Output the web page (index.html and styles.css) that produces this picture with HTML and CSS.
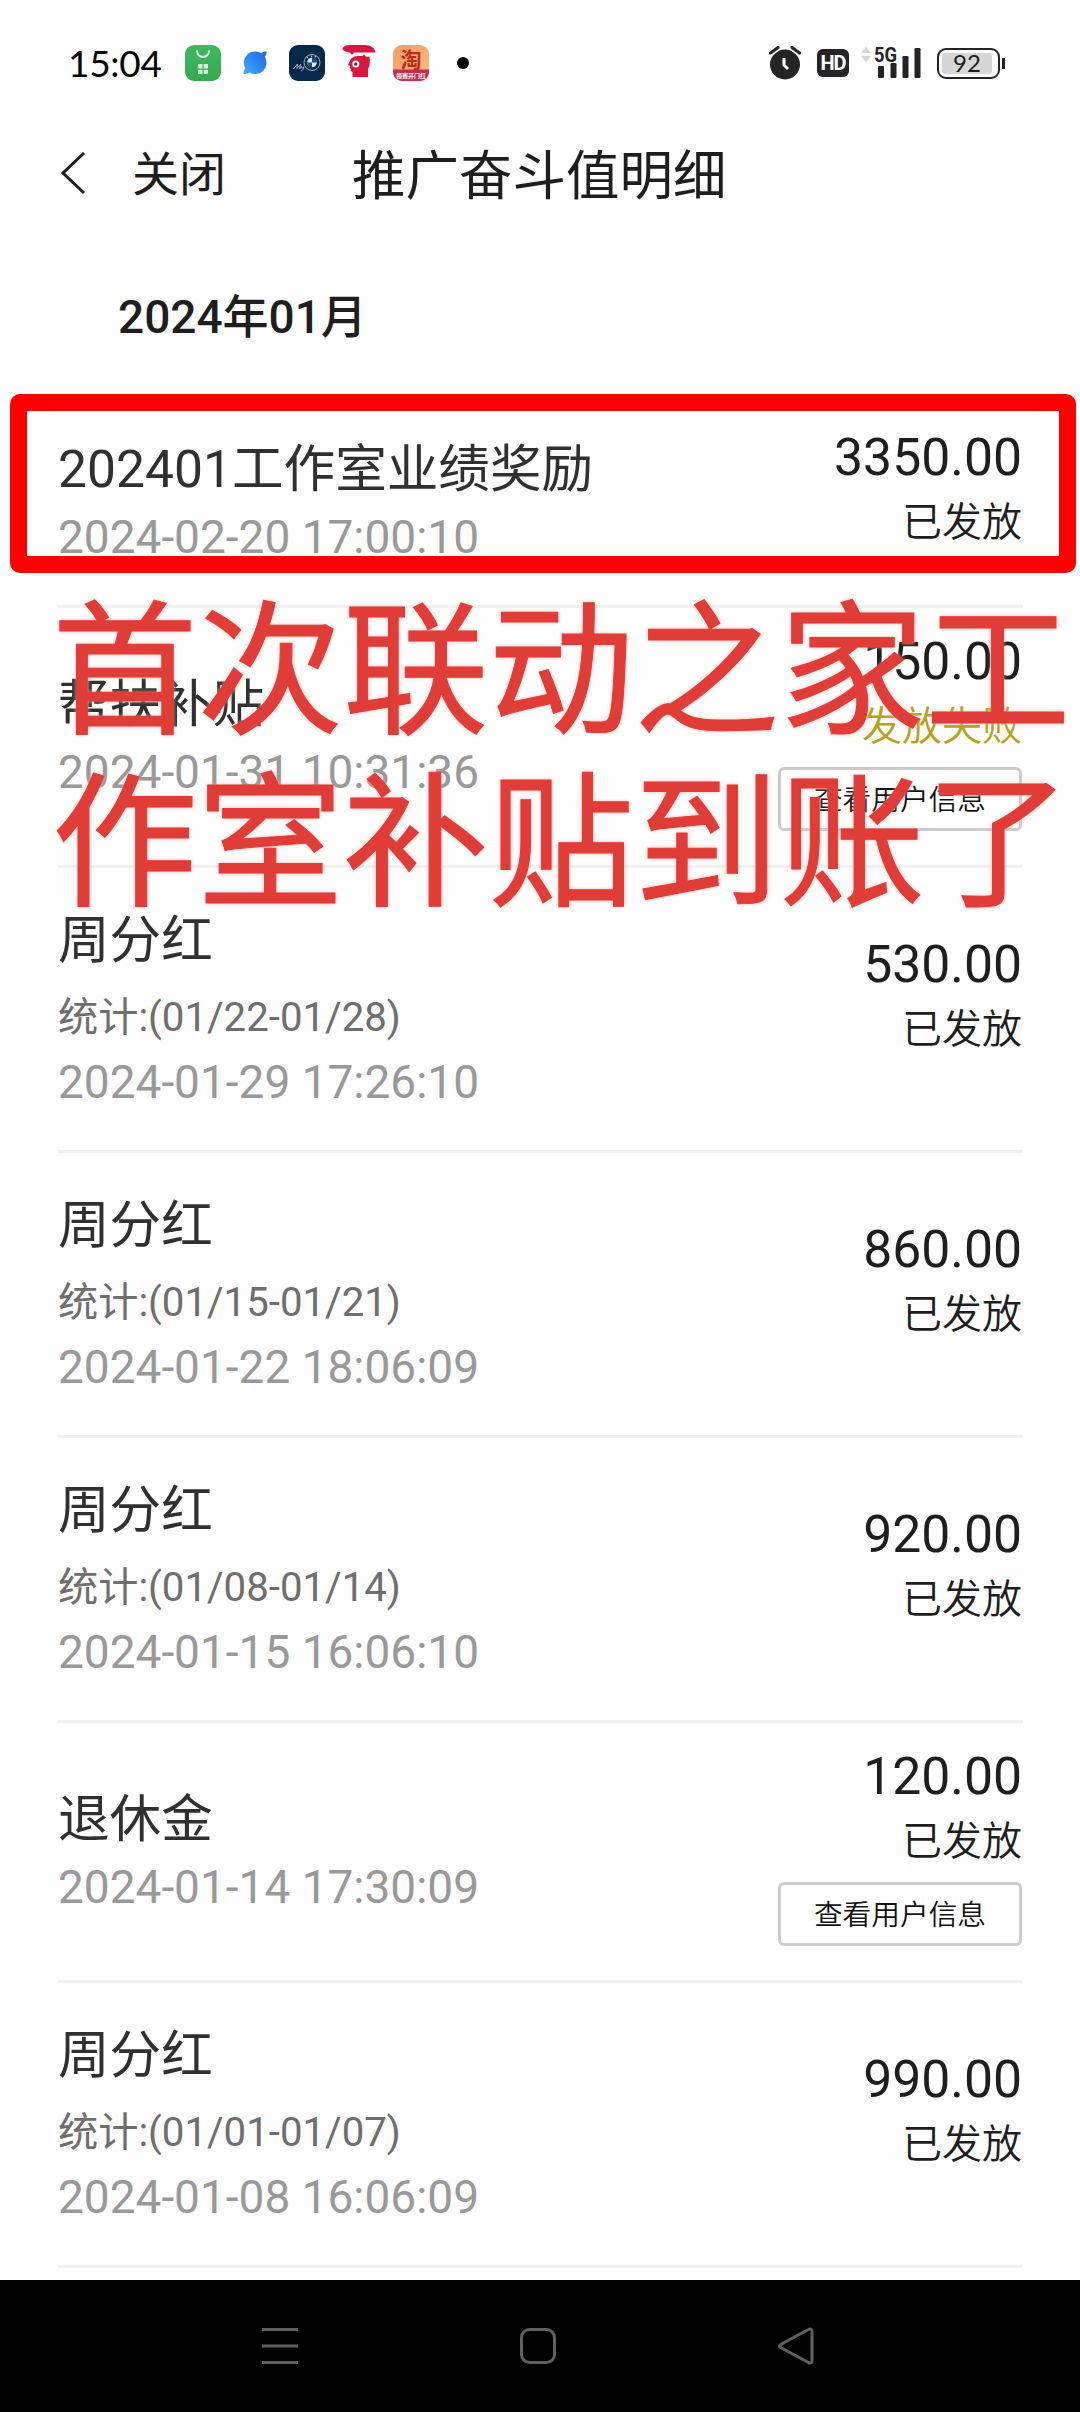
FILE: index.html
```html
<!DOCTYPE html>
<html lang="zh-CN">
<head>
<meta charset="utf-8">
<title>推广奋斗值明细</title>
<link rel="stylesheet" href="styles.css">
</head>
<body>
<div class="screen">
  <header class="status-bar">
    <span class="clock">15:04</span>
    <div class="apps">
      <svg class="app" viewBox="0 0 36 36"><defs><linearGradient id="g1" x2="0" y2="1"><stop offset="0" stop-color="#3fba62"/><stop offset="1" stop-color="#35a950"/></linearGradient></defs><rect width="36" height="36" rx="9" fill="url(#g1)"/><path d="M12 6a6 6 0 0 0 12 0" fill="none" stroke="#e4f8e8" stroke-width="1.8" stroke-linecap="round"/><path d="M13 19h4.500v4.500H14a1 1 0 0 1-1-1zM18.700 19h4.300v3.500a1 1 0 0 1-1 1h-3.300zM13 24.700h4.500V29H14a1 1 0 0 1-1-1zM18.700 24.700H22a1 1 0 0 1 1 1V28a1 1 0 0 1-1 1h-3.300z" fill="#d6f5dc"/></svg>
      <svg class="app" viewBox="0 0 36 36"><defs><linearGradient id="g2" x1="0" y1="1" x2="1" y2="0"><stop offset="0" stop-color="#3fb0ee"/><stop offset=".5" stop-color="#2f86f5"/><stop offset="1" stop-color="#2a62e0"/></linearGradient></defs><circle cx="18.200" cy="17.800" r="11.300" fill="url(#g2)"/><path d="M24 8c1.500-.8 4.800-2.200 5.500-1.300.8 1-1 4-2 5.600zM12.500 27.500c-1.500.9-5 1.900-5.700 1.200-.8-1 .5-4.200 1.500-5.700z" fill="url(#g2)"/></svg>
      <svg class="app" viewBox="0 0 36 36"><rect width="36" height="36" rx="9" fill="#06294a"/><circle cx="23" cy="17.500" r="8" fill="none" stroke="#9fb4c8" stroke-width="1"/><circle cx="23" cy="17.500" r="4.800" fill="#dce8f2"/><path d="M23 12.700a4.800 4.800 0 0 1 4.800 4.800H23zM23 22.300a4.800 4.800 0 0 1-4.800-4.800H23z" fill="#164d80"/><path d="M17.500 12l2 1M22 10.500l1 1.500M26.500 11l-.5 1.500" stroke="#fff" stroke-width=".9"/><path d="M4.500 24l4-5-.6 4.500 3.600-4-1 4c1 .5 1.500-1 2-2 0 2 1 2 2.500.3-.6 2.500-1.600 4-3 4.200" fill="none" stroke="#c8d6e4" stroke-width=".8"/></svg>
      <svg class="app" viewBox="0 0 36 36"><g fill="#d81540"><path d="M1.500 4C1.500 1.500 5 0 10 0h14c6 0 10 3.500 10.500 7.500H13L11 9.800 8.800 7.500C5 7 2 6 1.500 4z"/><path d="M9.500 14.500C11 12 14 11 17 11h4l2-1.500 2 2.200h3.500c.5 4 .8 8-1.500 12.300v8H11.500v-5l-2-1 .3-2-1.300-1.500 1-1.500L7 20z"/></g><circle cx="14.800" cy="19" r="3.500" fill="#fff"/><circle cx="14.800" cy="19" r="1.600" fill="#3b1a30"/></svg>
      <svg class="app" viewBox="0 0 36 36"><defs><clipPath id="c1"><rect width="36" height="36" rx="9"/></clipPath><linearGradient id="g3" x2="1" y2="1"><stop offset="0" stop-color="#f29a64"/><stop offset="1" stop-color="#fbbf83"/></linearGradient></defs><g clip-path="url(#c1)"><rect width="36" height="36" fill="url(#g3)"/><rect y="24.500" width="36" height="12" fill="#c92a4f"/></g><text class="tao" x="18" y="21.500" text-anchor="middle">淘</text><text class="tao-tag" x="18" y="33" text-anchor="middle">领赛开门红</text></svg>
      <span class="dot"></span>
    </div>
    <div class="system">
      <svg class="alarm" viewBox="0 0 32 34"><circle cx="16" cy="18.500" r="15" fill="#242426"/><path d="M1.500 7L9 1.500M30.500 7L23 1.500" stroke="#fdfdfd" stroke-width="6"/><path d="M1.500 7L9 1.500M30.500 7L23 1.500" stroke="#242426" stroke-width="3.200" stroke-linecap="round"/><path d="M15 12v7l4 4" fill="none" stroke="#fff" stroke-width="3"/></svg>
      <span class="hd">HD</span>
      <svg class="signal" viewBox="0 0 60 34"><path d="M0 7l5-6 5 6zM0 10l5 6 5-6z" fill="#d6d6d6"/><text class="net" x="13" y="16" textLength="23" lengthAdjust="spacingAndGlyphs">5G</text><g fill="#242426"><rect x="17" y="20" width="6" height="12" rx="1.200"/><rect x="29.500" y="17" width="6" height="15" rx="1.200"/><rect x="41.500" y="10" width="6" height="22" rx="1.200"/><rect x="53.500" y="2" width="6" height="30" rx="1.200"/></g></svg>
      <div class="battery"><span class="level">92</span></div>
    </div>
  </header>

  <nav class="title-bar">
    <svg class="back" viewBox="0 0 26 44"><path d="M24 2L3 22l21 20" fill="none" stroke="#1e1e1e" stroke-width="3"/></svg>
    <span class="close">关闭</span>
    <h1 class="title">推广奋斗值明细</h1>
  </nav>

  <h2 class="month">2024年01月</h2>

  <main class="list">
    <section class="row row-first">
      <div class="info"><p class="name">202401工作室业绩奖励</p><p class="date">2024-02-20 17:00:10</p></div>
      <div class="result"><p class="amount">3350.00</p><p class="state">已发放</p></div>
    </section>
    <section class="row row-action">
      <div class="info"><p class="name">帮扶补贴</p><p class="date">2024-01-31 10:31:36</p></div>
      <div class="result"><p class="amount">150.00</p><p class="state failed">发放失败</p><button class="view">查看用户信息</button></div>
    </section>
    <section class="row">
      <div class="info"><p class="name">周分红</p><p class="period">统计:(01/22-01/28)</p><p class="date">2024-01-29 17:26:10</p></div>
      <div class="result"><p class="amount">530.00</p><p class="state">已发放</p></div>
    </section>
    <section class="row">
      <div class="info"><p class="name">周分红</p><p class="period">统计:(01/15-01/21)</p><p class="date">2024-01-22 18:06:09</p></div>
      <div class="result"><p class="amount">860.00</p><p class="state">已发放</p></div>
    </section>
    <section class="row">
      <div class="info"><p class="name">周分红</p><p class="period">统计:(01/08-01/14)</p><p class="date">2024-01-15 16:06:10</p></div>
      <div class="result"><p class="amount">920.00</p><p class="state">已发放</p></div>
    </section>
    <section class="row row-action">
      <div class="info"><p class="name">退休金</p><p class="date">2024-01-14 17:30:09</p></div>
      <div class="result"><p class="amount">120.00</p><p class="state">已发放</p><button class="view">查看用户信息</button></div>
    </section>
    <section class="row">
      <div class="info"><p class="name">周分红</p><p class="period">统计:(01/01-01/07)</p><p class="date">2024-01-08 16:06:09</p></div>
      <div class="result"><p class="amount">990.00</p><p class="state">已发放</p></div>
    </section>
  </main>

  <footer class="nav-keys">
    <svg viewBox="0 0 40 40"><path d="M2 3.500h36M2 20h36M2 36.500h36"/></svg>
    <svg viewBox="0 0 40 40"><rect x="3.500" y="3.500" width="33" height="33" rx="8"/></svg>
    <svg viewBox="0 0 40 40"><path d="M32.500 3.500L5 18.200q-3 1.800 0 3.600l27.500 14.700q3.500 1.500 3.500-2v-29q0-3.500-3.500-2z"/></svg>
  </footer>

  <div class="mark-box"></div>
  <p class="mark-text">首次联动之家工<br>作室补贴到账了</p>
</div>
</body>
</html>
```
FILE: styles.css
```css
* { box-sizing: border-box; margin: 0; padding: 0; }
body {
  background: #fdfdfd;
  color: #1e1e1e;
  font-family: Roboto, "Noto Sans CJK SC", sans-serif;
}
.screen {
  position: relative;
  display: flex;
  flex-direction: column;
  width: 1080px;
  height: 2412px;
  overflow: hidden;
}

/* system status */
.status-bar {
  display: flex;
  align-items: center;
  height: 126px;
  padding: 0 75px 0 68px;
}
.clock {
  width: 117px;
  font: 37px/40px Lato, sans-serif;
  letter-spacing: -.3px;
  color: #000;
}
.apps { display: flex; align-items: center; gap: 16px; }
.app { width: 36px; height: 36px; overflow: visible; }
.dot { width: 12px; height: 12px; margin-left: 12px; border-radius: 50%; background: #000; }
.tao { font: 700 21px "Noto Sans CJK SC", sans-serif; fill: #c4281c; }
.tao-tag { font: 700 6px "Noto Sans CJK SC", sans-serif; fill: #fff; }
.system { display: flex; align-items: center; margin-left: auto; }
.alarm { width: 32px; height: 34px; }
.hd {
  width: 32px;
  height: 28px;
  margin-left: 16px;
  border-radius: 6px;
  background: #242426;
  color: #fff;
  font: 700 20px/28px Roboto, sans-serif;
  letter-spacing: -1px;
  text-align: center;
}
.signal { width: 60px; height: 34px; margin-left: 12px; overflow: visible; }
.net { font: 700 21px Roboto, sans-serif; fill: #242426; }
.battery {
  position: relative;
  display: flex;
  width: 63px;
  height: 31px;
  margin: 0 5px 0 16px;
  padding: 3px;
  border: 2px solid #242426;
  border-radius: 9px;
}
.battery::after {
  content: "";
  position: absolute;
  right: -7px;
  top: 8px;
  width: 3px;
  height: 11px;
  background: #242426;
}
.level {
  width: 50px;
  background: #d6d6d6;
  border-radius: 3px;
  font: 24px/20px Lato, sans-serif;
  color: #1c1c1c;
  text-align: center;
}

/* page header */
.title-bar {
  display: flex;
  align-items: center;
  height: 98px;
  padding-left: 60px;
}
.back { width: 26px; height: 44px; margin-top: -4px; }
.close { width: 220px; margin-left: 46px; font-size: 47px; line-height: 60px; }
.title { padding-top: 3px; font-size: 53.500px; line-height: 70px; font-weight: 400; }
.month {
  height: 176px;
  padding: 63px 0 0 118px;
  font-size: 46px;
  line-height: 60px;
  font-weight: 500;
}

/* records */
.list { padding: 0 57px 0 58px; flex: 1; }
.row {
  display: flex;
  justify-content: space-between;
  align-items: center;
  height: 285px;
  border-bottom: 3px solid #f0f0f0;
}
.row-first { height: 208px; }
.row-action { height: 260px; }
.name { padding-top: 2px; font-size: 51.600px; line-height: 70px; color: #303030; white-space: nowrap; }
.period { margin-top: 10px; font-size: 40.200px; line-height: 64px; color: #6e6e6e; }
.date { margin-top: -1px; font-size: 46px; line-height: 66px; color: #999; }
.row-first .info { padding-bottom: 2px; }
.result {
  display: flex;
  flex-direction: column;
  align-items: flex-end;
  padding: 0 1px 24px 0;
}
.row-first .result { padding-bottom: 26px; }
.row-action .result { padding-bottom: 14px; }
.amount { font-size: 51.700px; line-height: 66px; }
.state { font-size: 40px; line-height: 64px; font-weight: 350; }
.failed { color: #b5a21c; }
.view {
  width: 244px;
  height: 64px;
  margin-top: 8px;
  border: 3px solid #ccc;
  border-radius: 6px;
  background: #fff;
  color: #111;
  font: 350 28.700px/54px "Noto Sans CJK SC", sans-serif;
  padding-bottom: 2px;
}

.nav-keys {
  display: flex;
  align-items: center;
  justify-content: space-between;
  height: 132px;
  padding: 0 264px 0 260px;
  background: #000;
}
.nav-keys svg { width: 40px; height: 40px; fill: none; stroke: #606060; stroke-width: 3; }

/* annotations drawn over the page */
.mark-box {
  position: absolute;
  left: 10px;
  top: 394px;
  width: 1066px;
  height: 179px;
  border: 17px solid #f00;
  border-radius: 10px;
}
.mark-text {
  position: absolute;
  left: 52px;
  top: 574px;
  font: 145.500px/172px "Noto Sans CJK SC", sans-serif;
  color: #e03c38;
  white-space: nowrap;
  -webkit-text-stroke: 1px #e03c38;
  text-shadow: 0 0 4px #f4b0a8;
}
```
